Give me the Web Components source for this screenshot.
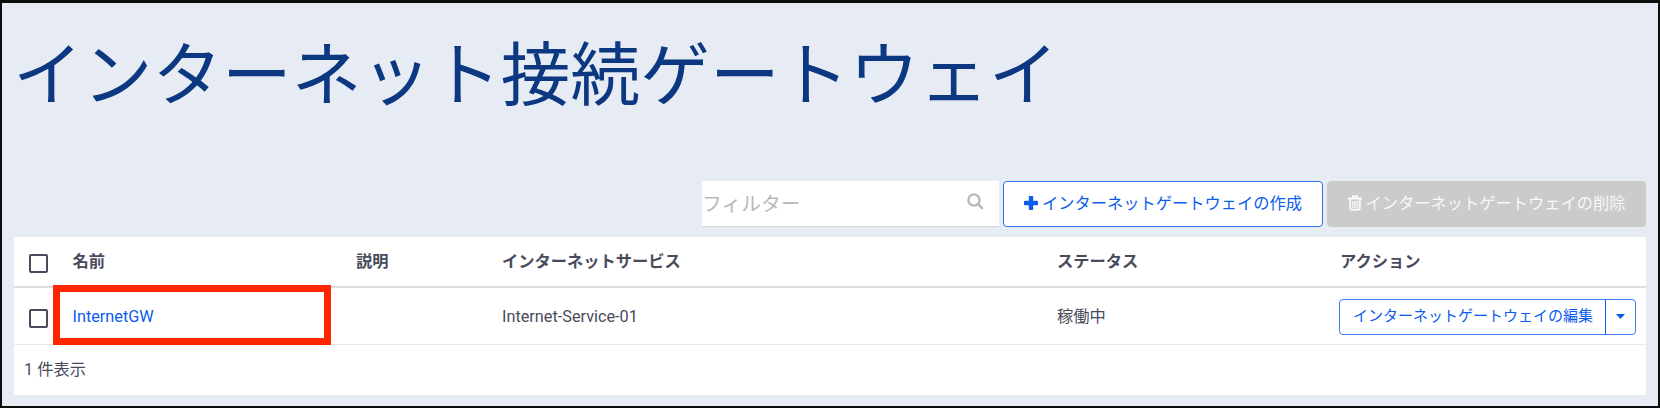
<!DOCTYPE html>
<html lang="ja">
<head>
<meta charset="utf-8">
<title>インターネット接続ゲートウェイ</title>
<style>
    body {
        margin: 0;
        font-family: Roboto, "Noto Sans CJK JP", sans-serif;
        font-size: 16.25px;
        color: #494b5c;
    }
</style>
</head>
<body>
<gateway-page heading="インターネット接続ゲートウェイ">
    <filter-box slot="tools" placeholder="フィルター"></filter-box>
    <action-button slot="tools" icon="plus">インターネットゲートウェイの作成</action-button>
    <action-button slot="tools" icon="trash" disabled>インターネットゲートウェイの削除</action-button>
    <gateway-table>
        <gateway-row head>
            <span slot="name">名前</span>
            <span slot="description">説明</span>
            <span slot="service">インターネットサービス</span>
            <span slot="status">ステータス</span>
            <span slot="action">アクション</span>
        </gateway-row>
        <gateway-row marked>
            <span slot="name">InternetGW</span>
            <span slot="service">Internet-Service-01</span>
            <span slot="status">稼働中</span>
            <split-button slot="action">インターネットゲートウェイの編集</split-button>
        </gateway-row>
        <span slot="footer">1 件表示</span>
    </gateway-table>
</gateway-page>

<script>
const icons = {
    plus: `<svg width="14" height="14" viewBox="0 0 14 14"><path fill="currentColor" d="M5.8 0h2.4q1 0 1 1v3.8H13q1 0 1 1v2.4q0 1-1 1H9.2V13q0 1-1 1H5.8q-1 0-1-1V9.2H1q-1 0-1-1V5.8q0-1 1-1h3.8V1q0-1 1-1z"/></svg>`,
    trash: `<svg width="14" height="16" viewBox="0 0 14 16"><path fill="none" stroke="currentColor" stroke-width="1.9" d="M0 3.5h14M4.4 3.5L5 1.2h4l.6 2.3M2.2 4v9.3q0 1.500 1.200 1.500h7.200q1.200 0 1.200-1.500V4"/><path fill="none" stroke="currentColor" stroke-width="1.300" d="M4.800 6v7M7 6v7M9.200 6v7"/></svg>`,
    search: `<svg width="17" height="17" viewBox="0 0 17 17"><circle cx="7" cy="7" r="5.6" fill="none" stroke="currentColor" stroke-width="2.4"/><path fill="none" stroke="currentColor" stroke-width="2.6" stroke-linecap="round" d="M11.3 11.3l3.7 3.7"/></svg>`
};

class GatewayPage extends HTMLElement {

    constructor() {
        super();
        this.shadowDOM = this.attachShadow({mode: "open"});
    }

    connectedCallback() {
        this.render();
    }

    render() {
        this.shadowDOM.innerHTML = `
        <style>
        :host {
            display: flex;
            flex-direction: column;
            box-sizing: border-box;
            height: 408px;
            padding: 0 12px;
            border: 2px solid #0b0d0d;
            border-top-width: 3px;
            background-color: #e6ebf4;
        }

        h1 {
            box-sizing: border-box;
            height: 178px;
            margin: 0 0 0 -1px;
            padding-top: 23px;
            font-size: 69.7px;
            font-weight: normal;
            line-height: 100px;
            color: #0c3781;
            white-space: nowrap;
        }

        .tools {
            display: flex;
            justify-content: flex-end;
            gap: 4px;
            height: 46px;
            margin-bottom: 10px;
        }
        </style>
        <h1>${this.getAttribute("heading")}</h1>
        <div class="tools"><slot name="tools"></slot></div>
        <slot></slot>
        `;
    }
}
customElements.define("gateway-page", GatewayPage);

class FilterBox extends HTMLElement {

    constructor() {
        super();
        this.shadowDOM = this.attachShadow({mode: "open"});
    }

    connectedCallback() {
        this.render();
    }

    render() {
        this.shadowDOM.innerHTML = `
        <style>
        :host {
            display: flex;
            align-items: center;
            justify-content: space-between;
            box-sizing: border-box;
            width: 297px;
            padding: 0 15px 3px 0;
            border-bottom: 1px solid #d6d8d4;
            background-color: white;
            color: #b9b9b9;
            font-size: 19.8px;
        }

        svg {
            display: block;
            margin-top: -1px;
        }
        </style>
        <span>${this.getAttribute("placeholder")}</span>
        ${icons.search}
        `;
    }
}
customElements.define("filter-box", FilterBox);

class ActionButton extends HTMLElement {

    constructor() {
        super();
        this.shadowDOM = this.attachShadow({mode: "open"});
    }

    connectedCallback() {
        this.render();
    }

    render() {
        this.shadowDOM.innerHTML = `
        <style>
        :host {
            display: flex;
            align-items: center;
            justify-content: center;
            gap: 4px;
            box-sizing: border-box;
            width: 320px;
            padding-bottom: 4px;
            border: 1px solid #2f73e8;
            border-radius: 4px;
            background-color: white;
            color: #0b5cee;
            white-space: nowrap;
            cursor: pointer;
        }

        :host([disabled]) {
            width: 319px;
            border-color: #cbcbcb;
            background-color: #cbcbcb;
            color: #f8f8f8;
            cursor: default;
        }

        svg {
            display: block;
            margin-top: 2px;
        }
        </style>
        ${icons[this.getAttribute("icon")]}
        <slot></slot>
        `;
    }
}
customElements.define("action-button", ActionButton);

class GatewayTable extends HTMLElement {

    constructor() {
        super();
        this.shadowDOM = this.attachShadow({mode: "open"});
    }

    connectedCallback() {
        this.render();
    }

    render() {
        this.shadowDOM.innerHTML = `
        <style>
        :host {
            display: block;
            height: 158px;
            background-color: white;
        }

        .footer {
            padding: 13px 10px;
            line-height: 24px;
        }
        </style>
        <slot></slot>
        <div class="footer"><slot name="footer"></slot></div>
        `;
    }
}
customElements.define("gateway-table", GatewayTable);

class GatewayRow extends HTMLElement {

    constructor() {
        super();
        this.shadowDOM = this.attachShadow({mode: "open"});
    }

    connectedCallback() {
        this.render();
    }

    render() {
        this.shadowDOM.innerHTML = `
        <style>
        :host {
            display: grid;
            grid-template-columns: 58.5px 283.5px 146px 555px 283px 1fr;
            align-items: center;
            box-sizing: border-box;
            height: 57px;
            padding-top: 1px;
            border-bottom: 1px solid #e9eaec;
            line-height: 24px;
        }

        :host([head]) {
            height: 51px;
            padding-top: 0;
            border-bottom: 2px solid #dedede;
            font-weight: bold;
        }

        .check {
            box-sizing: border-box;
            width: 19px;
            height: 19px;
            margin: 3px 0 0 15px;
            border: 2px solid #494b5c;
            border-radius: 2px;
        }

        :host([head]) .check {
            margin-top: 4px;
        }

        .name {
            position: relative;
        }

        :host([marked]) .name {
            color: #0b5cee;
        }

        /* red frame round the name of a marked row */
        :host([marked]) .name::after {
            content: "";
            position: absolute;
            left: -19.5px;
            top: -20px;
            width: 264px;
            height: 46px;
            border: 7px solid #ff2600;
        }
        </style>
        <div class="check"></div>
        <div class="name"><slot name="name"></slot></div>
        <div><slot name="description"></slot></div>
        <div><slot name="service"></slot></div>
        <div><slot name="status"></slot></div>
        <div><slot name="action"></slot></div>
        `;
    }
}
customElements.define("gateway-row", GatewayRow);

class SplitButton extends HTMLElement {

    constructor() {
        super();
        this.shadowDOM = this.attachShadow({mode: "open"});
    }

    connectedCallback() {
        this.render();
    }

    render() {
        this.shadowDOM.innerHTML = `
        <style>
        :host {
            display: flex;
            box-sizing: border-box;
            width: 297px;
            height: 36px;
            margin-left: -1px;
            border: 1px solid #3c7cee;
            border-radius: 4px;
            color: #0b5cee;
            font-size: 15px;
            line-height: 33px;
            white-space: nowrap;
        }

        .label {
            flex: 1;
            padding-left: 13px;
        }

        .toggle {
            display: flex;
            align-items: center;
            justify-content: center;
            width: 29px;
            border-left: 1.5px solid #0b5cee;
        }
        </style>
        <div class="label"><slot></slot></div>
        <div class="toggle"><svg width="9" height="5" viewBox="0 0 9 5"><path fill="currentColor" d="M0 0h9L4.5 5z"/></svg></div>
        `;
    }
}
customElements.define("split-button", SplitButton);
</script>
</body>
</html>
